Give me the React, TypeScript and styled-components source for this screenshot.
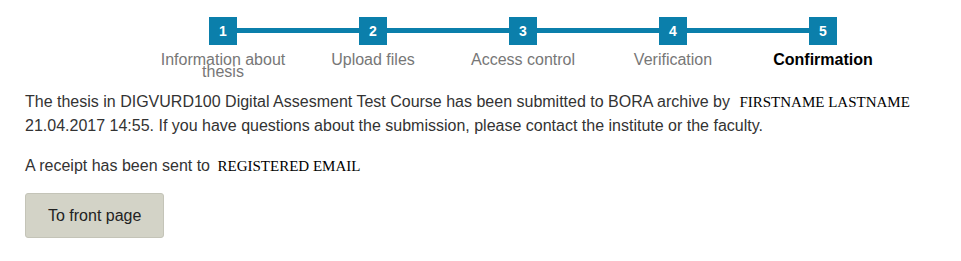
import React from 'react';
import styled, { createGlobalStyle } from 'styled-components';

const GlobalStyle = createGlobalStyle`
  body {
    margin: 0;
    background: #fff;
    font-family: "Liberation Sans", Arial, sans-serif;
  }
`;

const Page = styled.div`
  padding: 17px 25px 0;
  color: #333;
  font-size: 16px;
`;

const Stepper = styled.ol`
  position: relative;
  display: flex;
  list-style: none;
  margin: 0 0 0 123px;
  padding: 0;
  width: 750px;

  &::before {
    content: '';
    position: absolute;
    top: 11px;
    left: 75px;
    right: 75px;
    height: 5px;
    background: #0b7fab;
  }
`;

const Step = styled.li`
  position: relative;
  width: 150px;
  display: flex;
  flex-direction: column;
  align-items: center;
`;

const StepNumber = styled.span`
  width: 28px;
  height: 28px;
  display: flex;
  align-items: center;
  justify-content: center;
  background: #0b7fab;
  color: #fff;
  font-weight: bold;
  font-size: 14px;
`;

const StepLabel = styled.span<{ $active?: boolean }>`
  margin-top: 9px;
  text-align: center;
  line-height: 12px;
  font-size: 16px;
  color: ${(p) => (p.$active ? '#000' : '#777')};
  font-weight: ${(p) => (p.$active ? 'bold' : 'normal')};
`;

const Paragraph = styled.p`
  margin: 0 0 16px;
  line-height: 24px;
`;

const Summary = styled(Paragraph)`
  margin-top: 12px;
`;

const Value = styled.span<{ $gap: number }>`
  margin-left: ${(p) => p.$gap}px;
  font-family: "Liberation Serif", "Times New Roman", serif;
  font-size: 15px;
  color: #000;
`;

const Button = styled.button`
  margin-top: -1px;
  padding: 10px 22px;
  font-family: inherit;
  font-size: 16px;
  line-height: 23px;
  color: #222;
  background: #d3d3c7;
  border: 1px solid #c4c4b8;
  border-radius: 3px;
  cursor: pointer;
`;

const steps = [
  'Information about thesis',
  'Upload files',
  'Access control',
  'Verification',
  'Confirmation',
];

export default function App() {
  const current = 5;
  return (
    <>
      <GlobalStyle />
      <Page>
        <Stepper>
          {steps.map((label, idx) => (
            <Step key={label}>
              <StepNumber>{idx + 1}</StepNumber>
              <StepLabel $active={idx + 1 === current}>{label}</StepLabel>
            </Step>
          ))}
        </Stepper>
        <Summary>
          The thesis in DIGVURD100 Digital Assesment Test Course has been
          submitted to BORA archive by{' '}
          <Value $gap={5}>FIRSTNAME LASTNAME</Value> 21.04.2017 14:55. If you
          have questions about the submission, please contact the institute or
          the faculty.
        </Summary>
        <Paragraph>
          A receipt has been sent to{' '}
          <Value $gap={3}>REGISTERED EMAIL</Value>
        </Paragraph>
        <Button type="button">To front page</Button>
      </Page>
    </>
  );
}
